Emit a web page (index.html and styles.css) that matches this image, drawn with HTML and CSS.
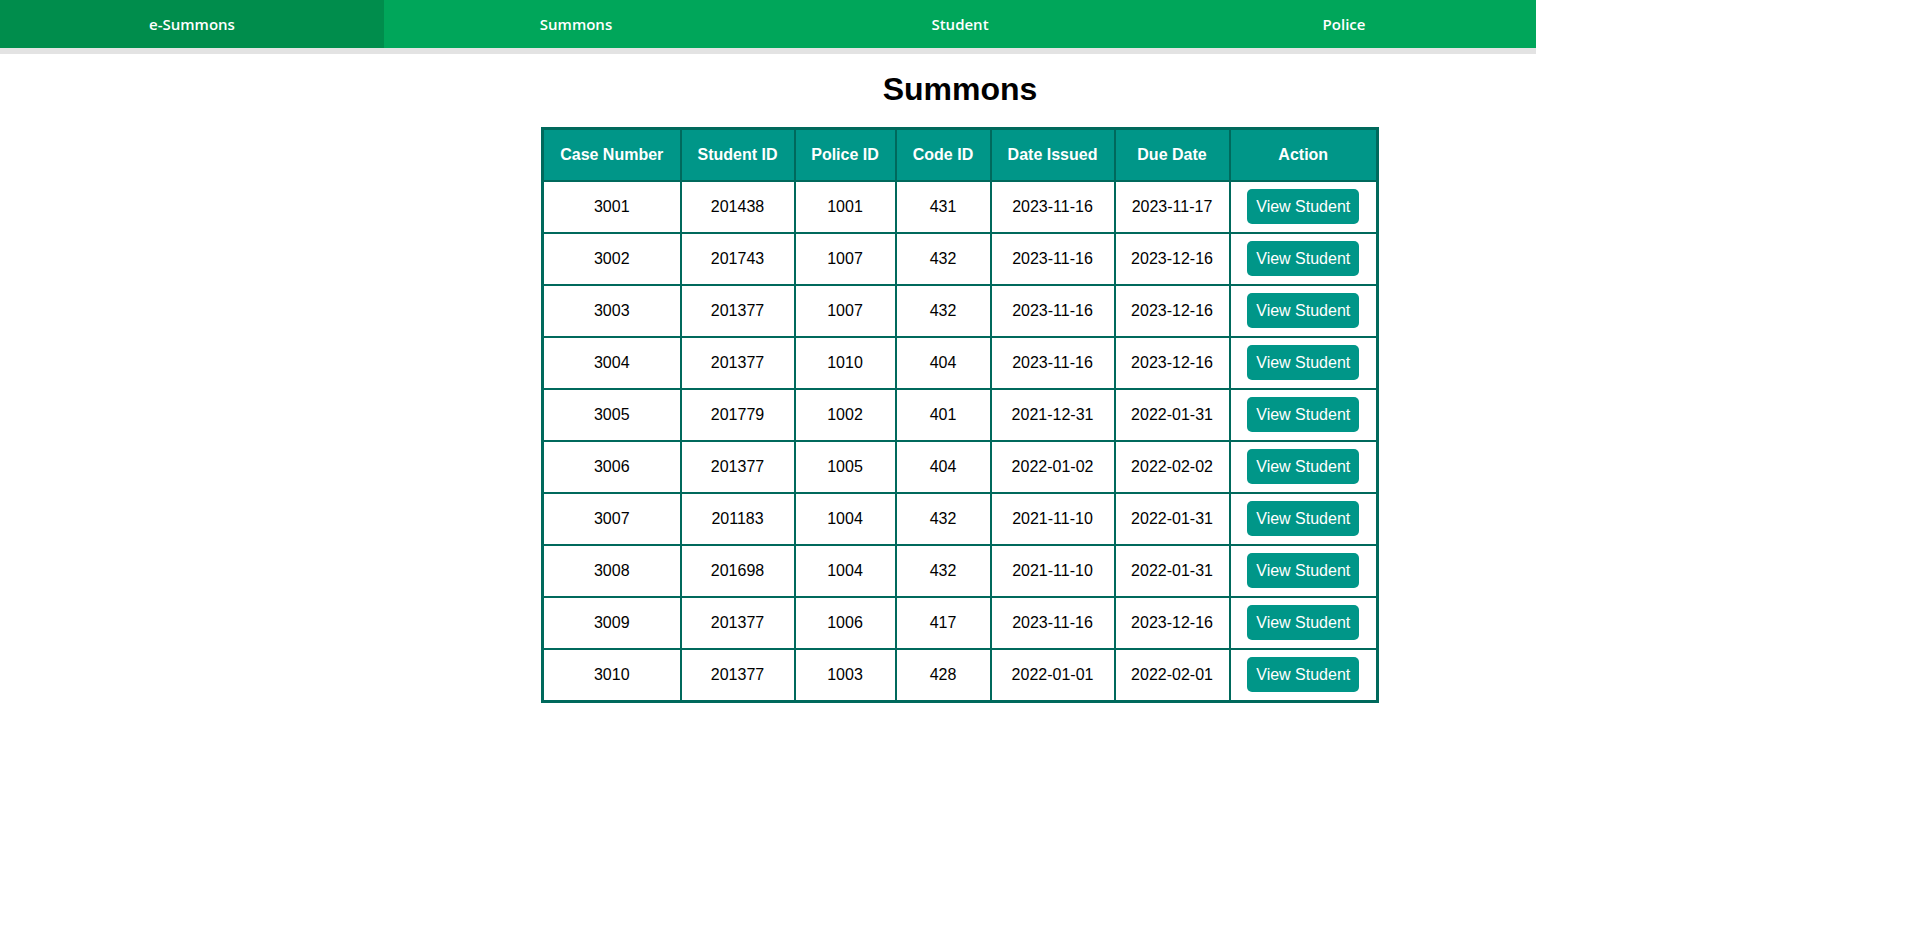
FILE: index.html
```html
<!DOCTYPE html>
<html lang="en">
<head>
<meta charset="utf-8">
<title>e-Summons</title>
<link rel="stylesheet" href="styles.css">
</head>
<body>
<nav class="topnav">
  <a class="nav-item nav-brand" href="#">e-Summons</a>
  <a class="nav-item" href="#">Summons</a>
  <a class="nav-item" href="#">Student</a>
  <a class="nav-item" href="#">Police</a>
</nav>
<main class="content">
  <h1 class="page-title">Summons</h1>
  <table class="summons-table">
    <colgroup>
      <col class="c1"><col class="c2"><col class="c3"><col class="c4"><col class="c5"><col class="c6"><col class="c7">
    </colgroup>
    <thead>
      <tr><th>Case Number</th><th>Student ID</th><th>Police ID</th><th>Code ID</th><th>Date Issued</th><th>Due Date</th><th>Action</th></tr>
    </thead>
    <tbody>
      <tr><td>3001</td><td>201438</td><td>1001</td><td>431</td><td>2023-11-16</td><td>2023-11-17</td><td><button class="btn">View Student</button></td></tr>
      <tr><td>3002</td><td>201743</td><td>1007</td><td>432</td><td>2023-11-16</td><td>2023-12-16</td><td><button class="btn">View Student</button></td></tr>
      <tr><td>3003</td><td>201377</td><td>1007</td><td>432</td><td>2023-11-16</td><td>2023-12-16</td><td><button class="btn">View Student</button></td></tr>
      <tr><td>3004</td><td>201377</td><td>1010</td><td>404</td><td>2023-11-16</td><td>2023-12-16</td><td><button class="btn">View Student</button></td></tr>
      <tr><td>3005</td><td>201779</td><td>1002</td><td>401</td><td>2021-12-31</td><td>2022-01-31</td><td><button class="btn">View Student</button></td></tr>
      <tr><td>3006</td><td>201377</td><td>1005</td><td>404</td><td>2022-01-02</td><td>2022-02-02</td><td><button class="btn">View Student</button></td></tr>
      <tr><td>3007</td><td>201183</td><td>1004</td><td>432</td><td>2021-11-10</td><td>2022-01-31</td><td><button class="btn">View Student</button></td></tr>
      <tr><td>3008</td><td>201698</td><td>1004</td><td>432</td><td>2021-11-10</td><td>2022-01-31</td><td><button class="btn">View Student</button></td></tr>
      <tr><td>3009</td><td>201377</td><td>1006</td><td>417</td><td>2023-11-16</td><td>2023-12-16</td><td><button class="btn">View Student</button></td></tr>
      <tr><td>3010</td><td>201377</td><td>1003</td><td>428</td><td>2022-01-01</td><td>2022-02-01</td><td><button class="btn">View Student</button></td></tr>
    </tbody>
  </table>
</main>
</body>
</html>
```
FILE: styles.css
```css
html, body {
  margin: 0;
  padding: 0;
  background: #ffffff;
}

body {
  font-family: "Liberation Sans", Arial, sans-serif;
  color: #000000;
}

.topnav {
  display: flex;
  width: 1536px;
  height: 48px;
  background: #00a65a;
  border-bottom: 6px solid #e3e3e3;
}

.nav-item {
  flex: 1 1 0;
  display: flex;
  align-items: center;
  justify-content: center;
  color: #ffffff;
  text-decoration: none;
  font-family: "Open Sans", "Noto Sans", sans-serif;
  font-weight: 600;
  font-size: 15px;
}

.nav-brand {
  background: #008d4c;
}

.content {
  display: flex;
  flex-direction: column;
  align-items: center;
}

.page-title {
  margin: 17px 0 19px;
  font-size: 32px;
  font-weight: bold;
  line-height: 37px;
}

.summons-table {
  border-collapse: collapse;
  table-layout: fixed;
  width: 835px;
  border: 3px solid #00695c;
  font-size: 16px;
}

.c1 { width: 138px; }
.c2 { width: 114px; }
.c3 { width: 101px; }
.c4 { width: 95px; }
.c5 { width: 124px; }
.c6 { width: 115px; }
.c7 { width: 148px; }

.summons-table th,
.summons-table td {
  border: 2px solid #00695c;
  text-align: center;
  vertical-align: middle;
}

.summons-table th {
  background: #009688;
  color: #ffffff;
  font-weight: bold;
  padding: 15px 8px 16px;
  height: 19px;
  line-height: 19px;
}

.summons-table td {
  padding: 7px 8px 8px;
  height: 35px;
  line-height: 19px;
}

.btn {
  display: inline-block;
  height: 35px;
  padding: 0 9px;
  border: none;
  border-radius: 5px;
  background: #009688;
  color: #ffffff;
  font-family: "Liberation Sans", Arial, sans-serif;
  font-size: 16px;
  line-height: 35px;
  cursor: pointer;
}
```
